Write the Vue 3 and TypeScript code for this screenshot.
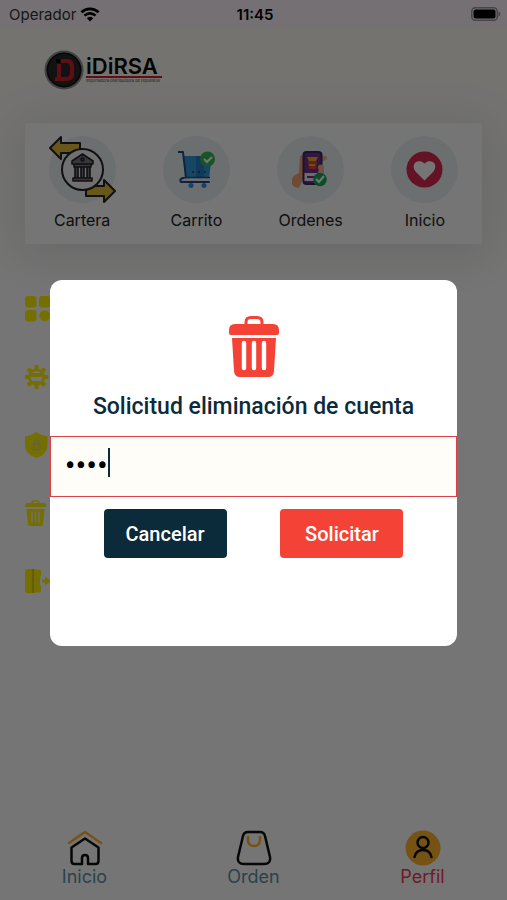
<script setup lang="ts">
import { ref } from 'vue'

type Shortcut = { id: string; label: string }

const shortcuts: Shortcut[] = [
  { id: 'wallet', label: 'Cartera' },
  { id: 'cart', label: 'Carrito' },
  { id: 'orders', label: 'Ordenes' },
  { id: 'home', label: 'Inicio' },
]

const tabs: Shortcut[] = [
  { id: 'home', label: 'Inicio' },
  { id: 'order', label: 'Orden' },
  { id: 'profile', label: 'Perfil' },
]

const options: Shortcut[] = [
  { id: 'categories', label: 'Categorías' },
  { id: 'settings', label: 'Ajustes' },
  { id: 'privacy', label: 'Privacidad' },
  { id: 'delete', label: 'Eliminar cuenta' },
  { id: 'logout', label: 'Salir' },
]

const gearTeeth = [0, 45, 90, 135, 180, 225, 270, 315]

const password = ref('1234')
const activeTab = ref('profile')
</script>

<template>
  <div class="app">
    <div class="status">
      <div class="carrier">
        <span>Operador</span>
        <svg width="20" height="15" viewBox="0 0 20 15">
          <path d="M1.4 5.3a12.4 12.4 0 0 1 17.2 0" />
          <path d="M4.5 8.6a8 8 0 0 1 11 0" />
          <path class="dot" d="M10 14.4 6.9 11.2a4.6 4.6 0 0 1 6.2 0z" />
        </svg>
      </div>
      <strong>11:45</strong>
      <svg class="battery" width="30" height="14" viewBox="0 0 30 14">
        <rect x="0.75" y="0.75" width="25.5" height="12.5" rx="3.5" fill="none" stroke="#999" stroke-width="1.5" />
        <rect x="2.5" y="2.5" width="22" height="9" rx="2" />
        <path d="M27.5 4.5q2 .6 2 2.5t-2 2.5z" fill="#999" />
      </svg>
    </div>

    <header class="header">
      <svg class="emblem" width="40" height="40" viewBox="0 0 40 40">
        <circle cx="20" cy="20" r="18.5" fill="#292929" stroke="#8f9090" stroke-width="2" />
        <circle cx="20" cy="20" r="16.5" fill="none" stroke="#111" stroke-width="1.5" />
        <path d="M17 9h6q7 0 7 7v8q0 7-7 7H11v-4h2V14h4v13h5q4 0 4-4v-6q0-4-4-4h-5z" fill="#d01f2b" />
        <path d="M12 9h4v4h-4z" fill="#000" />
      </svg>
      <div class="brand">
        <span class="wordmark">iDiRSA</span>
        <span class="rule"></span>
        <small>Importadora distribuidora de repuestos</small>
      </div>
    </header>

    <nav class="shortcuts">
      <a v-for="item in shortcuts" :key="item.id" href="#">
        <span class="disc">
          <svg v-if="item.id === 'wallet'" width="67" height="67" viewBox="0 0 67 67">
            <g fill="#e5bb37" stroke="#242228" stroke-width="2" stroke-linejoin="round">
              <path d="M1 12 12 1v6h19v10H12v6z" />
              <path d="M66 55 55 44v6H37v10h18v6z" />
            </g>
            <circle cx="33.500" cy="33.500" r="20.500" fill="#f4f4f6" stroke="#242228" stroke-width="2" />
            <g fill="#77787e" stroke="#242228" stroke-width="1.600" stroke-linejoin="round">
              <path d="M23 28v-3l10.500-7L44 25v3zM25 28h17v3H25zM26 31h3v11h-3zM32 31h3v11h-3zM38 31h3v11h-3zM24 42h19v3H24z" />
              <circle cx="33.500" cy="23.500" r="1.500" />
            </g>
          </svg>
          <svg v-else-if="item.id === 'cart'" width="37" height="37" viewBox="0 0 37 37">
            <path d="M6 5h28l-3 22H8z" fill="#3399dd" />
            <path d="M18 5h8v21h-8z" fill="#237fc4" />
            <path d="M0 1h5l3 26H5q-4 1-2 4h28" fill="none" stroke="#24488d" stroke-width="2" stroke-linecap="round" stroke-linejoin="round" />
            <path d="M6 28.500h25" stroke="#d9eefc" stroke-width="2" />
            <path d="M9 26.500h23" stroke="#24488d" stroke-width="1.500" />
            <path d="M14 21h2M20 21h2M26 21h2" stroke="#164477" stroke-width="1.500" />
            <circle cx="13" cy="34.500" r="2.500" fill="#3390e0" />
            <circle cx="26" cy="34.500" r="2.500" fill="#3390e0" />
            <circle cx="29.500" cy="8" r="7.500" fill="#38b654" />
            <path d="m26 8 3 3 5-5" fill="none" stroke="#fff" stroke-width="2" />
          </svg>
          <svg v-else-if="item.id === 'orders'" width="37" height="37" viewBox="0 0 37 37">
            <path d="M8 5q3-2 3 2v21l-4 9q-9-1-7-9 1-4 7-6z" fill="#f4a273" />
            <path d="M30 5q5-1 5 2t-5 3z" fill="#f4b48e" />
            <rect x="11.500" y="1" width="18" height="32" rx="3" fill="#713489" stroke="#392a67" stroke-width="2" />
            <path d="M12.500 22h16v8h-16z" fill="#eee9f3" />
            <path d="M15 25h7v2h-7z" fill="#713489" />
            <path d="M16 10h9l-1 8h-7z" fill="#e7453c" />
            <path d="M15 6h11l-2 4h-7zM17 13h6v2h-6z" fill="#f6a926" />
            <path d="M27 14q5-2 5 3v6h-5q-2-2 0-4-2-3 0-5z" fill="#f4b48e" />
            <circle cx="28" cy="28.500" r="6.800" fill="#14a85b" />
            <path d="m24 28 3 3 5-6" fill="none" stroke="#fff" stroke-width="2" />
          </svg>
          <svg v-else width="37" height="37" viewBox="0 0 37 37">
            <circle cx="18.500" cy="18.500" r="18" fill="#d92b50" />
            <path d="M18.500 29.500 9.500 20.500C4 13 12 7 18.500 12.500 25 7 33 13 27.500 20.500z" fill="#fff" />
          </svg>
        </span>
        <span>{{ item.label }}</span>
      </a>
    </nav>

    <main class="options">
      <button v-for="item in options" :key="item.id" type="button" :aria-label="item.label">
        <svg width="26" height="26" viewBox="0 0 26 26">
          <g v-if="item.id === 'categories'">
            <rect width="11.500" height="11.500" rx="3" />
            <rect x="14" width="11.500" height="11.500" rx="3" />
            <rect y="14" width="11.500" height="11.500" rx="3" />
            <circle cx="19.700" cy="19.700" r="5.500" />
          </g>
          <g v-else-if="item.id === 'settings'">
            <rect v-for="angle in gearTeeth" :key="angle" x="9.500" y="1" width="4" height="5" rx="1" :transform="`rotate(${angle} 11.5 13)`" />
            <circle cx="11.500" cy="13" r="7.300" fill="none" stroke="currentColor" stroke-width="2.600" />
            <path d="M6 9h11v4H6zM8 17h7l-1 3H9z" />
          </g>
          <g v-else-if="item.id === 'privacy'">
            <path d="M11.500 0q5 4 11 4v9q0 9-11 13Q0 22 0 13V4q6 0 11.500-4z" />
            <path d="M8.500 12h6v5.500h-6zM9.500 12v-2q2-3.500 4 0v2" fill="none" stroke="#d6d6a0" stroke-width="1.500" />
          </g>
          <g v-else-if="item.id === 'delete'">
            <path d="M2 3h17q2 0 2 4H0q0-4 2-4zM1.500 9h18l-1.500 15q0 2-2 2H5q-2 0-2-2z" />
            <path d="M7 3q0-2 2-2h3q2 0 2 2" fill="none" stroke="currentColor" stroke-width="1.600" />
            <path d="M7 11.500v11M10.500 11.500v11M14 11.500v11" stroke="#f2f2d8" stroke-width="1.600" />
          </g>
          <g v-else>
            <path d="M0 3q0-2 2-2h6l8 1v5l-1 3v6l1 3v5l-8 1H2q-2 0-2-2zM17 11.500h3V9q4 2 6 4-2 2-6 4v-2.500h-3z" />
            <path d="M8 1v24" stroke="#b5ac00" stroke-width="1" />
          </g>
        </svg>
      </button>
    </main>

    <nav class="tabs">
      <a v-for="tab in tabs" :key="tab.id" href="#" :class="{ active: tab.id === activeTab }" @click.prevent="activeTab = tab.id">
        <svg v-if="tab.id === 'home'" width="36" height="36" viewBox="0 0 36 36">
          <path d="M2 13 18 2l16 11" stroke="#ffb52e" />
          <path d="M4.500 17.500 18 8.500l13.500 9V31q0 3-3 3H21v-6q0-3-3-3t-3 3v6H7.500q-3 0-3-3z" />
        </svg>
        <svg v-else-if="tab.id === 'order'" width="36" height="36" viewBox="0 0 36 36">
          <path d="M12 2h12q4 0 5 4l5 21q1 7-6 7H8q-7 0-6-7L7 6q1-4 5-4z" />
          <path d="M12 7v3q0 6 6 6t6-6V7" stroke="#ffb52e" />
        </svg>
        <svg v-else width="36" height="36" viewBox="0 0 36 36">
          <circle cx="18" cy="18" r="17.500" fill="#ffb52e" stroke="none" />
          <circle cx="18" cy="12.500" r="5.500" />
          <path d="M9.500 27q1.500-7 8.500-7t8.500 7" />
        </svg>
        <span>{{ tab.label }}</span>
      </a>
    </nav>

    <div class="backdrop">
      <form class="dialog" role="dialog" aria-labelledby="dialog-title" @submit.prevent>
        <svg class="bin" width="50" height="62" viewBox="0 0 50 62">
          <path d="M17 9V6q0-4.500 5-4.500h6q5 0 5 4.500v3" fill="none" stroke="#f44336" stroke-width="3" />
          <path d="M6 8h38q6 0 6 6v3q0 2-2 2H2q-2 0-2-2v-3q0-6 6-6zM3 22h44l-2 33q-.5 6-6 6H11q-5.500 0-6-6z" fill="#f44336" />
          <path d="M15 27v25M25 27v25M35 27v25" stroke="#fff" stroke-width="4.400" stroke-linecap="round" />
        </svg>
        <h1 id="dialog-title">Solicitud eliminación de cuenta</h1>
        <div class="field">
          <input v-model="password" type="password" aria-labelledby="dialog-title" autocomplete="off" />
          <span class="caret"></span>
        </div>
        <div class="actions">
          <button type="button" class="cancel">Cancelar</button>
          <button type="submit" class="confirm">Solicitar</button>
        </div>
      </form>
    </div>
  </div>
</template>

<style>
body {
  margin: 0;
}
</style>

<style scoped>
.app {
  position: relative;
  display: flex;
  flex-direction: column;
  min-height: 100vh;
  background: linear-gradient(#fffaf1 28px, #fbfaf7 120px, #fff 300px);
  font-family: Inter, "Liberation Sans", sans-serif;
}

a {
  color: inherit;
  text-decoration: none;
}

.status {
  display: grid;
  grid-template-columns: 1fr auto 1fr;
  align-items: center;
  height: 28px;
  padding: 0 6px 0 9px;
  background: #fff4fa;
  font-size: 15px;
}

.status strong {
  font-weight: 600;
}

.carrier {
  display: flex;
  align-items: center;
  gap: 4px;
  color: #333;
}

.carrier svg {
  fill: none;
  stroke: #000;
  stroke-width: 2.6;
}

.carrier .dot {
  fill: #000;
  stroke: none;
}

.battery {
  justify-self: end;
}

.header {
  display: flex;
  align-items: center;
  gap: 2px;
  height: 83px;
  padding: 0 44px 12px;
}

.brand {
  display: flex;
  flex-direction: column;
  width: 76px;
}

.wordmark {
  font-size: 22px;
  line-height: 20px;
  font-weight: 600;
  color: #0b0b0b;
}

.rule {
  height: 2px;
  background: #d01f2b;
}

.brand small {
  font-size: 4px;
  line-height: 5px;
  white-space: nowrap;
  color: #444;
}

.shortcuts {
  display: grid;
  grid-template-columns: repeat(4, 1fr);
  margin: 0 25px;
  padding: 13px 0;
  background: #fff;
  border-radius: 2px;
  box-shadow: 0 8px 48px 8px rgba(0, 0, 0, 0.1);
}

.shortcuts a {
  display: flex;
  flex-direction: column;
  align-items: center;
  gap: 6px;
  font-size: 16px;
  line-height: 22px;
  color: #222;
}

.disc {
  display: grid;
  place-items: center;
  width: 67px;
  height: 67px;
  border-radius: 50%;
  background: #e9f2f3;
}

.options {
  flex: 1;
  display: flex;
  flex-direction: column;
  align-items: flex-start;
  padding: 31px 25px;
}

.options button {
  display: flex;
  align-items: center;
  height: 68px;
  padding: 0;
  border: 0;
  background: none;
  color: #fff000;
}

.options svg {
  fill: currentColor;
}

.tabs {
  display: grid;
  grid-template-columns: repeat(3, 1fr);
  padding-bottom: 12px;
}

.tabs a {
  display: flex;
  flex-direction: column;
  align-items: center;
  font-size: 18px;
  line-height: 22px;
  color: #5b92a2;
}

.tabs .active {
  color: #f23b55;
}

.tabs svg {
  fill: none;
  stroke: #111;
  stroke-width: 2.5;
  stroke-linecap: round;
  stroke-linejoin: round;
}

.backdrop {
  position: absolute;
  inset: 0;
  display: flex;
  align-items: center;
  justify-content: center;
  padding-top: 26px;
  background: rgba(0, 0, 0, 0.54);
}

.dialog {
  display: flex;
  flex-direction: column;
  align-items: center;
  width: 80.4%;
  padding: 36px 0 88px;
  border-radius: 12px;
  background: #fff;
  font-family: Roboto, "Liberation Sans", sans-serif;
}

h1 {
  margin: 14px 0;
  font-size: 23px;
  line-height: 30px;
  font-weight: 500;
  color: #0b2b3b;
}

.field {
  position: relative;
  align-self: stretch;
}

.field input {
  display: block;
  box-sizing: border-box;
  width: 100%;
  height: 61px;
  padding: 0 14px 4px;
  border: 1px solid #df4047;
  border-radius: 0;
  outline: none;
  background: #fffdf8;
  font: 32px Roboto, sans-serif;
  color: #000;
}

.caret {
  position: absolute;
  left: 58px;
  top: 12px;
  width: 2px;
  height: 29px;
  background: #0b2b3b;
}

.actions {
  display: flex;
  justify-content: space-evenly;
  align-self: stretch;
  padding-top: 12px;
}

.actions button {
  width: 123px;
  height: 49px;
  padding: 0;
  border: 0;
  border-radius: 4px;
  font: 500 20px Roboto, sans-serif;
  color: #fff;
}

.actions .cancel {
  background: #0b2b3b;
}

.actions .confirm {
  background: #f44336;
}
</style>
